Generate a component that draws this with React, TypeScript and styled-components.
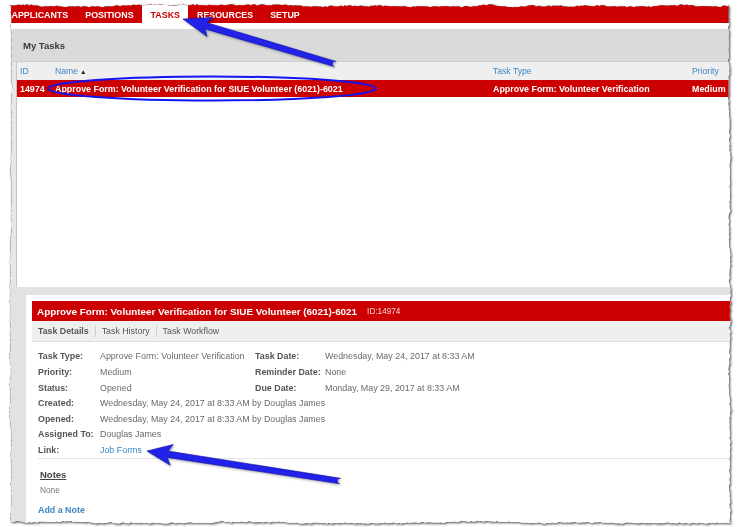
import React, { useMemo } from "react";
import styled, { createGlobalStyle } from "styled-components";

const GlobalStyle = createGlobalStyle`
  *, *::before, *::after { box-sizing: border-box; }
  html, body { margin: 0; padding: 0; background: #fff; }
  body { font-family: "Liberation Sans", Arial, sans-serif; }
`;

const RED = "#cc0000";
const LINK = "#3d86c2";

const Canvas = styled.div`
  position: relative;
  width: 739px;
  height: 527px;
  overflow: hidden;
  background: #fff;
`;

// torn-paper frame: the shadow follows the clipped sheet
const Frame = styled.div`
  margin: 4px 0 0 9px;
  width: 722px;
  height: 520px;
  filter: drop-shadow(0 0 0.6px rgba(0, 0, 0, 0.8))
    drop-shadow(1.6px 1.6px 1px rgba(0, 0, 0, 0.65));
`;

const Sheet = styled.div<{ $clip: string }>`
  width: 100%;
  height: 100%;
  clip-path: ${(p) => p.$clip};
  background: #e7e7e7;
  display: flex;
  flex-direction: column;
  overflow: hidden;
`;

/* ---------- top navigation ---------- */

const NavBar = styled.nav`
  height: 19px;
  background: ${RED};
  display: flex;
  margin-left: -6px;
`;

const NavItem = styled.div<{ $active?: boolean }>`
  display: flex;
  align-items: center;
  padding: 3px 8.5px 0;
  font-size: 8.9px;
  font-weight: bold;
  color: ${(p) => (p.$active ? RED : "#fff")};
  background: ${(p) => (p.$active ? "#fff" : "transparent")};
`;

const NavGap = styled.div`
  height: 6px;
  background: #fff;
`;

/* ---------- task list ---------- */

const ListPanel = styled.section`
  height: 258px;
  display: flex;
  flex-direction: column;
`;

const PanelHeader = styled.header`
  height: 33px;
  display: flex;
  align-items: center;
  padding-left: 14px;
  background: #dadada;
  border-bottom: 1px solid #cfcfcf;
  font-size: 9.5px;
  font-weight: bold;
  color: #3a3a3a;
`;

const ListBody = styled.div`
  flex: 1;
  padding-left: 7px;
  display: flex;
`;

const Table = styled.div`
  flex: 1;
  background: #fff;
  border-left: 1px solid #c6c6c6;
`;

const TableRow = styled.div<{ $head?: boolean }>`
  height: ${(p) => (p.$head ? 18 : 17)}px;
  display: grid;
  grid-template-columns: 35px 438px 199px 1fr;
  align-items: center;
  background: ${(p) => (p.$head ? "#efefef" : RED)};
  color: ${(p) => (p.$head ? LINK : "#fff")};
  font-size: ${(p) => (p.$head ? 8.6 : 8.9)}px;
  font-weight: ${(p) => (p.$head ? "normal" : "bold")};
  white-space: nowrap;
`;

const Cell = styled.div`
  padding-left: 3px;
  overflow: hidden;
`;

const SortMark = styled.span`
  font-size: 6.5px;
  color: #222;
  margin-left: 2px;
`;

/* ---------- task detail ---------- */

const DetailArea = styled.div`
  flex: 1;
  display: flex;
  padding: 8px 0 0 17px;
  background: #e2e2e2;
`;

const DetailPanel = styled.section`
  flex: 1;
  background: #fff;
  padding: 6px 0 0 6px;
  display: flex;
  flex-direction: column;
`;

const TitleBar = styled.div`
  height: 20px;
  display: flex;
  align-items: center;
  gap: 10px;
  padding-left: 5px;
  background: ${RED};
  white-space: nowrap;
`;

const Title = styled.span`
  font-size: 9.9px;
  font-weight: bold;
  color: #fff;
`;

const IdTag = styled.span`
  font-size: 8.2px;
  color: #f6d6d6;
`;

const TabStrip = styled.div`
  height: 21px;
  display: flex;
  align-items: center;
  padding-left: 6px;
  background: #efefef;
  border-bottom: 1px solid #dedede;
`;

const Tab = styled.span<{ $active?: boolean }>`
  font-size: 8.8px;
  font-weight: ${(p) => (p.$active ? "bold" : "normal")};
  color: #555;
`;

const TabDivider = styled.span`
  width: 1px;
  height: 12px;
  margin: 0 6px;
  background: #cfcfcf;
`;

const DetailGrid = styled.div`
  margin-top: 6.7px;
  padding-left: 6px;
  display: grid;
  grid-template-columns: 62px 155px 70px 1fr;
  grid-auto-rows: 15.6px;
  align-items: center;
  font-size: 8.9px;
  white-space: nowrap;
`;

const Label = styled.span`
  font-weight: bold;
  color: #555;
`;

const Value = styled.span<{ $wide?: boolean }>`
  color: #6a6a6a;
  grid-column: ${(p) => (p.$wide ? "2 / -1" : "auto")};
`;

const LinkValue = styled.a`
  color: ${LINK};
  text-decoration: none;
  grid-column: 2 / -1;
`;

const Rule = styled.div`
  margin-left: 6px;
  border-top: 1px solid #e6e6e6;
`;

const NotesTitle = styled.div`
  margin: 9px 0 0 8px;
  line-height: 14px;
  font-size: 9.5px;
  font-weight: bold;
  color: #444;
  text-decoration: underline;
`;

const NotesEmpty = styled.div`
  margin: 2px 0 0 8px;
  line-height: 12px;
  font-size: 8.3px;
  color: #777;
`;

const AddNote = styled.a`
  margin: 8px 0 0 6px;
  line-height: 12px;
  font-size: 8.9px;
  font-weight: bold;
  color: ${LINK};
  text-decoration: none;
`;

/* ---------- callouts drawn over the page ---------- */

const Callouts = styled.svg`
  position: absolute;
  inset: 0;
  pointer-events: none;
`;

type Pt = [number, number];

function mulberry32(seed: number) {
  let a = seed;
  return () => {
    a = (a + 0x6d2b79f5) | 0;
    let t = Math.imul(a ^ (a >>> 15), 1 | a);
    t = (t + Math.imul(t ^ (t >>> 7), 61 | t)) ^ t;
    return ((t ^ (t >>> 14)) >>> 0) / 4294967296;
  };
}

function tornClip(w: number, h: number, seed: number) {
  const rnd = mulberry32(seed);
  let walk = 1.2;
  const bite = () => {
    walk += (rnd() - 0.5) * 0.9;
    walk = Math.min(2.2, Math.max(0.3, walk));
    return (walk + rnd() * 1.1).toFixed(2);
  };
  const step = 2;
  const pts: string[] = [];
  for (let x = 0; x < w; x += step) pts.push(`${x}px ${bite()}px`);
  for (let y = 0; y < h; y += step) pts.push(`calc(100% - ${bite()}px) ${y}px`);
  for (let x = w; x > 0; x -= step) pts.push(`${x}px calc(100% - ${bite()}px)`);
  for (let y = h; y > 0; y -= step) pts.push(`${bite()}px ${y}px`);
  return `polygon(${pts.join(", ")})`;
}

function arrowPath(tip: Pt, tail: Pt, headLen: number, headHalf: number, shaftHalf: number) {
  const dx = tail[0] - tip[0];
  const dy = tail[1] - tip[1];
  const len = Math.hypot(dx, dy);
  const ux = dx / len;
  const uy = dy / len;
  const px = -uy;
  const py = ux;
  const at = (d: number, s: number): string =>
    `${(tip[0] + ux * d + px * s).toFixed(1)},${(tip[1] + uy * d + py * s).toFixed(1)}`;
  return [
    `M${tip[0]},${tip[1]}`,
    `L${at(headLen, headHalf)}`,
    `L${at(headLen - 4, shaftHalf)}`,
    `L${at(len, shaftHalf * 0.85)}`,
    `A${shaftHalf * 0.85},${shaftHalf * 0.85} 0 0 1 ${at(len, -shaftHalf * 0.85)}`,
    `L${at(headLen - 4, -shaftHalf)}`,
    `L${at(headLen, -headHalf)}`,
    "Z",
  ].join(" ");
}

const details: [string, string, string, string][] = [
  ["Task Type:", "Approve Form: Volunteer Verification", "Task Date:", "Wednesday, May 24, 2017 at 8:33 AM"],
  ["Priority:", "Medium", "Reminder Date:", "None"],
  ["Status:", "Opened", "Due Date:", "Monday, May 29, 2017 at 8:33 AM"],
];

const history: [string, string][] = [
  ["Created:", "Wednesday, May 24, 2017 at 8:33 AM by Douglas James"],
  ["Opened:", "Wednesday, May 24, 2017 at 8:33 AM by Douglas James"],
  ["Assigned To:", "Douglas James"],
];

export default function App() {
  const clip = useMemo(() => tornClip(722, 520, 20170524), []);

  return (
    <Canvas>
      <GlobalStyle />
      <Frame>
        <Sheet $clip={clip}>
          <NavBar>
            <NavItem>APPLICANTS</NavItem>
            <NavItem>POSITIONS</NavItem>
            <NavItem $active>TASKS</NavItem>
            <NavItem>RESOURCES</NavItem>
            <NavItem>SETUP</NavItem>
          </NavBar>
          <NavGap />

          <ListPanel>
            <PanelHeader>My Tasks</PanelHeader>
            <ListBody>
              <Table>
                <TableRow $head>
                  <Cell>ID</Cell>
                  <Cell>
                    Name<SortMark>▲</SortMark>
                  </Cell>
                  <Cell>Task Type</Cell>
                  <Cell>Priority</Cell>
                </TableRow>
                <TableRow>
                  <Cell>14974</Cell>
                  <Cell>Approve Form: Volunteer Verification for SIUE Volunteer (6021)-6021</Cell>
                  <Cell>Approve Form: Volunteer Verification</Cell>
                  <Cell>Medium</Cell>
                </TableRow>
              </Table>
            </ListBody>
          </ListPanel>

          <DetailArea>
            <DetailPanel>
              <TitleBar>
                <Title>Approve Form: Volunteer Verification for SIUE Volunteer (6021)-6021</Title>
                <IdTag>ID:14974</IdTag>
              </TitleBar>
              <TabStrip>
                <Tab $active>Task Details</Tab>
                <TabDivider />
                <Tab>Task History</Tab>
                <TabDivider />
                <Tab>Task Workflow</Tab>
              </TabStrip>

              <DetailGrid>
                {details.map(([l1, v1, l2, v2]) => (
                  <React.Fragment key={l1}>
                    <Label>{l1}</Label>
                    <Value>{v1}</Value>
                    <Label>{l2}</Label>
                    <Value>{v2}</Value>
                  </React.Fragment>
                ))}
                {history.map(([l, v]) => (
                  <React.Fragment key={l}>
                    <Label>{l}</Label>
                    <Value $wide>{v}</Value>
                  </React.Fragment>
                ))}
                <Label>Link:</Label>
                <LinkValue href="#">Job Forms</LinkValue>
              </DetailGrid>
              <Rule />

              <NotesTitle>Notes</NotesTitle>
              <NotesEmpty>None</NotesEmpty>
              <AddNote href="#">Add a Note</AddNote>
            </DetailPanel>
          </DetailArea>
        </Sheet>
      </Frame>

      <Callouts width="739" height="527" viewBox="0 0 739 527">
        <defs>
          <filter id="callout-shadow" x="-10%" y="-30%" width="120%" height="160%">
            <feDropShadow dx="1" dy="1.2" stdDeviation="0.9" floodColor="#000" floodOpacity="0.35" />
          </filter>
        </defs>
        <ellipse cx="212" cy="88.5" rx="164" ry="12" fill="none" stroke="#1414f0" strokeWidth="2" />
        <g filter="url(#callout-shadow)" fill="#2222ea" stroke="#10109a" strokeWidth="0.6">
          <path d={arrowPath([183, 19], [335, 64], 28, 10, 3.2)} />
          <path d={arrowPath([147, 451], [340, 481], 25, 10.5, 3.2)} />
        </g>
      </Callouts>
    </Canvas>
  );
}
